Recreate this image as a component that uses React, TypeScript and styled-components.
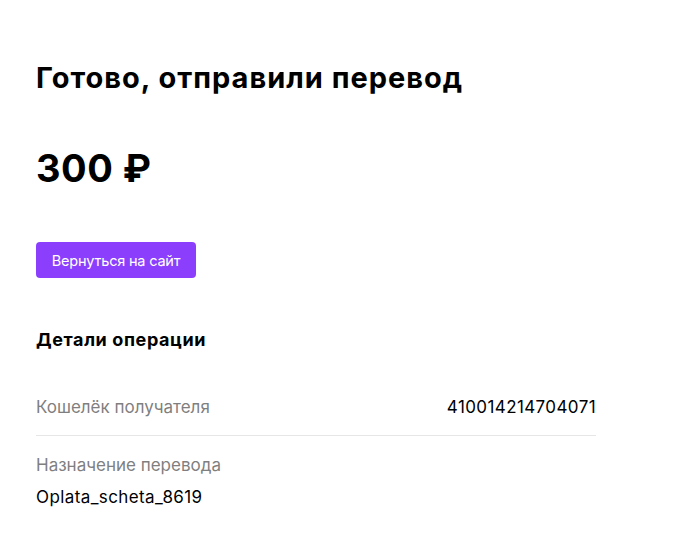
import React from "react";
import styled, { createGlobalStyle } from "styled-components";

const GlobalStyle = createGlobalStyle`
  html, body { margin: 0; padding: 0; background: #ffffff; }
  body { font-family: Inter, "Noto Sans", "Liberation Sans", sans-serif; color: #000; }
  * { box-sizing: border-box; }
`;

const Page = styled.main`
  padding: 58px 36px 40px 36px;
  width: 632px;
  display: flex;
  flex-direction: column;
`;

const Title = styled.h1`
  margin: 0;
  font-size: 29px;
  line-height: 40px;
  font-weight: 700;
  letter-spacing: 1px;
`;

const Amount = styled.div`
  margin-top: 46px;
  font-size: 38px;
  line-height: 48px;
  font-weight: 700;
  letter-spacing: 0.5px;
`;

const BackButton = styled.button`
  margin-top: 50px;
  align-self: flex-start;
  height: 36px;
  width: 160px;
  padding: 0;
  border: none;
  border-radius: 4px;
  background: #8b3ffd;
  color: #ffffff;
  font-family: inherit;
  font-size: 14.5px;
  font-weight: 400;
  letter-spacing: -0.2px;
  cursor: pointer;
`;

const SectionTitle = styled.h2`
  margin: 50px 0 0 0;
  font-size: 18px;
  line-height: 24px;
  font-weight: 700;
  letter-spacing: 0.6px;
`;

const Details = styled.div`
  margin-top: 43px;
  width: 560px;
  display: flex;
  flex-direction: column;
`;

const Row = styled.div<{ $stacked?: boolean; $divider?: boolean }>`
  display: flex;
  flex-direction: ${(p) => (p.$stacked ? "column" : "row")};
  justify-content: space-between;
  align-items: ${(p) => (p.$stacked ? "flex-start" : "center")};
  gap: ${(p) => (p.$stacked ? "8px" : "0")};
  padding: ${(p) => (p.$stacked ? "17px 0 0 0" : "0 0 16px 0")};
  border-bottom: ${(p) => (p.$divider ? "1px solid #e6e6e6" : "none")};
`;

const Label = styled.span`
  font-size: 17px;
  line-height: 24px;
  color: #7f7f7f;
`;

const Value = styled.span`
  font-size: 17px;
  line-height: 24px;
  letter-spacing: 0.4px;
  color: #000;
`;

export default function App() {
  return (
    <>
      <GlobalStyle />
      <Page>
        <Title>Готово, отправили перевод</Title>
        <Amount>300 ₽</Amount>
        <BackButton>Вернуться на сайт</BackButton>
        <SectionTitle>Детали операции</SectionTitle>
        <Details>
          <Row $divider>
            <Label>Кошелёк получателя</Label>
            <Value>410014214704071</Value>
          </Row>
          <Row $stacked>
            <Label>Назначение перевода</Label>
            <Value>Oplata_scheta_8619</Value>
          </Row>
        </Details>
      </Page>
    </>
  );
}
